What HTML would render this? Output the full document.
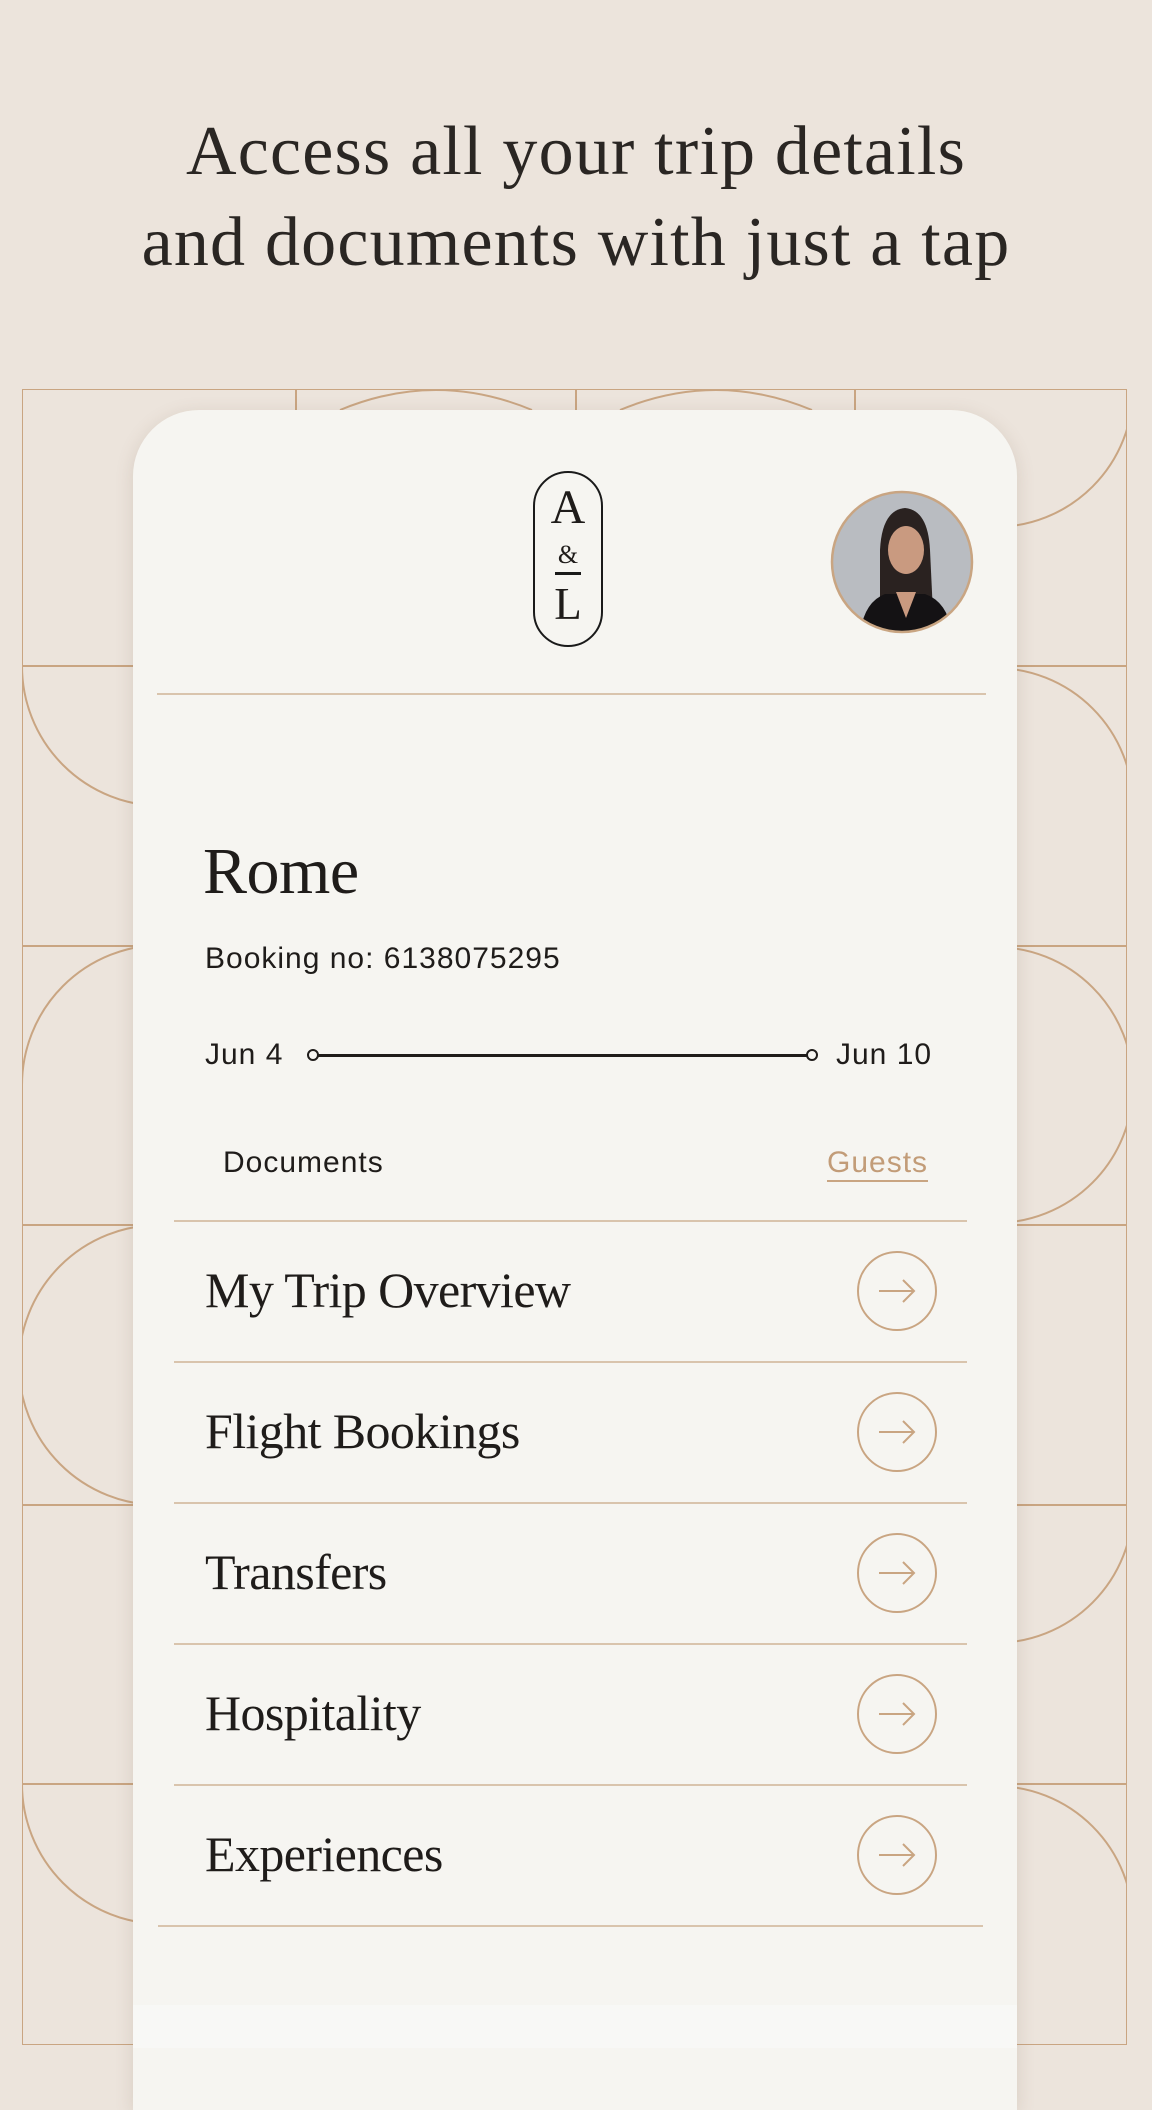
<!DOCTYPE html>
<html><head><meta charset="utf-8"><style>
*{margin:0;padding:0;box-sizing:border-box}
body{width:1152px;height:2048px;background:#ece4dc;position:relative;overflow:hidden;font-family:"Liberation Sans",sans-serif;color:#1f1c1a}
.title{position:absolute;top:106px;left:0;width:1152px;text-align:center;font-family:"Liberation Serif",serif;font-size:70px;line-height:91px;color:#2a2623;letter-spacing:1.2px}
svg.bg{position:absolute;left:0;top:0}
.card{position:absolute;left:133px;top:410px;width:884px;height:1700px;background:#f6f5f1;border-radius:66px 66px 0 0;box-shadow:0 4px 18px rgba(120,100,80,.18)}
.strip{position:absolute;left:133px;top:2005px;width:884px;height:43px;background:#f8f8f6}
.abs{position:absolute}
.serif{font-family:"Liberation Serif",serif}
.row{position:absolute;left:205px;font-family:"Liberation Serif",serif;font-size:50px;color:#1f1c1a;letter-spacing:-0.6px}
.hr{position:absolute;height:2px;background:#d9c4ad}
.s{font-size:30px;line-height:34px;letter-spacing:1px}
</style></head><body>
<svg class="bg" width="1152" height="2048" viewBox="0 0 1152 2048">
<defs><clipPath id="c"><rect x="22" y="389" width="1105" height="1656"/></clipPath></defs>
<g fill="none" stroke="#c9a582" stroke-width="2" clip-path="url(#c)">
<rect x="22" y="389" width="1105" height="1656"/>
<line x1="22" y1="666" x2="1127" y2="666"/><line x1="22" y1="946" x2="1127" y2="946"/>
<line x1="22" y1="1225" x2="1127" y2="1225"/><line x1="22" y1="1505" x2="1127" y2="1505"/>
<line x1="22" y1="1784" x2="1127" y2="1784"/>
<line x1="296" y1="389" x2="296" y2="2045"/><line x1="576" y1="389" x2="576" y2="2045"/><line x1="855" y1="389" x2="855" y2="2045"/>
<!-- left arcs -->
<path d="M22 666 A140 140 0 0 0 162 806"/>
<path d="M162 945 A140 140 0 0 0 22 1085"/>
<path d="M159 1225 A140 140 0 0 0 159 1505"/>
<path d="M22 1784 A140 140 0 0 0 162 1924"/>
<!-- right arcs -->
<path d="M995 527 A138 138 0 0 0 1133 389"/>
<path d="M995 668 A138 138 0 0 1 1133 806"/>
<path d="M995 947 A138 138 0 0 1 995 1223"/>
<path d="M995 1643 A138 138 0 0 0 1133 1505"/>
<path d="M995 1786 A138 138 0 0 1 1133 1924"/>
<!-- top middle humps -->
<path d="M296 540 A277 277 0 0 1 576 480"/>
<path d="M296 480 A277 277 0 0 1 576 540" opacity="0"/>
<path d="M340 410 Q436 370 532 410"/>
<path d="M620 410 Q716 370 812 410"/>
</g></svg>
<div class="title">Access all your trip details<br>and documents with just a tap</div>
<div class="card"></div>
<div class="strip"></div>
<!-- logo -->
<div class="abs" style="left:533px;top:471px;width:70px;height:176px;border:2.5px solid #1a1a1a;border-radius:35px"></div>
<div class="abs serif" style="left:533px;top:480px;width:70px;text-align:center;font-size:48px;line-height:56px">A</div>
<div class="abs serif" style="left:533px;top:540px;width:70px;text-align:center;font-size:26px;line-height:30px">&amp;</div>
<div class="abs" style="left:555px;top:572px;width:26px;height:2.5px;background:#1a1a1a"></div>
<div class="abs serif" style="left:533px;top:578px;width:70px;text-align:center;font-size:45px;line-height:52px">L</div>
<!-- avatar -->
<svg class="abs" style="left:830px;top:490px" width="144" height="144" viewBox="0 0 144 144">
<defs><clipPath id="a"><circle cx="72" cy="72" r="70"/></clipPath></defs>
<g clip-path="url(#a)"><rect width="144" height="144" fill="#b9bcc1"/>
<path d="M50 144 L50 60 Q52 20 75 18 Q98 20 100 60 L104 144 Z" fill="#2a2220"/>
<path d="M30 144 Q34 112 55 104 L95 104 Q118 112 122 144 Z" fill="#141214"/>
<ellipse cx="76" cy="60" rx="18" ry="24" fill="#c99a80"/>
<path d="M66 102 L76 128 L86 102 Z" fill="#c99a80"/></g>
<circle cx="72" cy="72" r="70" fill="none" stroke="#c9a582" stroke-width="2.5"/>
</svg>
<div class="hr" style="left:157px;top:693px;width:829px"></div>
<div class="abs serif" style="left:203px;top:834px;font-size:66px;line-height:76px;letter-spacing:-0.5px">Rome</div>
<div class="abs s" style="left:205px;top:942px">Booking no: 6138075295</div>
<div class="abs s" style="left:205px;top:1038px">Jun 4</div>
<div class="abs" style="left:315px;top:1054px;width:496px;height:2.5px;background:#1f1c1a"></div>
<div class="abs" style="left:307px;top:1049px;width:12px;height:12px;border:2px solid #1f1c1a;border-radius:50%;background:#f6f5f1"></div>
<div class="abs" style="left:806px;top:1049px;width:12px;height:12px;border:2px solid #1f1c1a;border-radius:50%;background:#f6f5f1"></div>
<div class="abs s" style="left:836px;top:1038px">Jun 10</div>
<div class="abs s" style="left:223px;top:1146px">Documents</div>
<div class="abs s" style="left:827px;top:1146px;color:#c29c78;border-bottom:2px solid #c9a582">Guests</div>
<div class="hr" style="left:174px;top:1220px;width:793px"></div>
<div class="row" style="top:1261px">My Trip Overview</div>
<div class="hr" style="left:174px;top:1361px;width:793px"></div>
<div class="row" style="top:1402px">Flight Bookings</div>
<div class="hr" style="left:174px;top:1502px;width:793px"></div>
<div class="row" style="top:1543px">Transfers</div>
<div class="hr" style="left:174px;top:1643px;width:793px"></div>
<div class="row" style="top:1684px">Hospitality</div>
<div class="hr" style="left:174px;top:1784px;width:793px"></div>
<div class="row" style="top:1825px">Experiences</div>
<div class="hr" style="left:158px;top:1925px;width:825px"></div>
<svg class="abs" style="left:0;top:0" width="1152" height="2048" viewBox="0 0 1152 2048">
<g fill="none" stroke="#c9a582" stroke-width="2">
<g id="ar"><circle cx="897" cy="1291" r="39"/><path d="M879 1291 H914 M903 1280 L914 1291 L903 1302"/></g>
<use href="#ar" y="141"/><use href="#ar" y="282"/><use href="#ar" y="423"/><use href="#ar" y="564"/>
</g></svg>
</body></html>
